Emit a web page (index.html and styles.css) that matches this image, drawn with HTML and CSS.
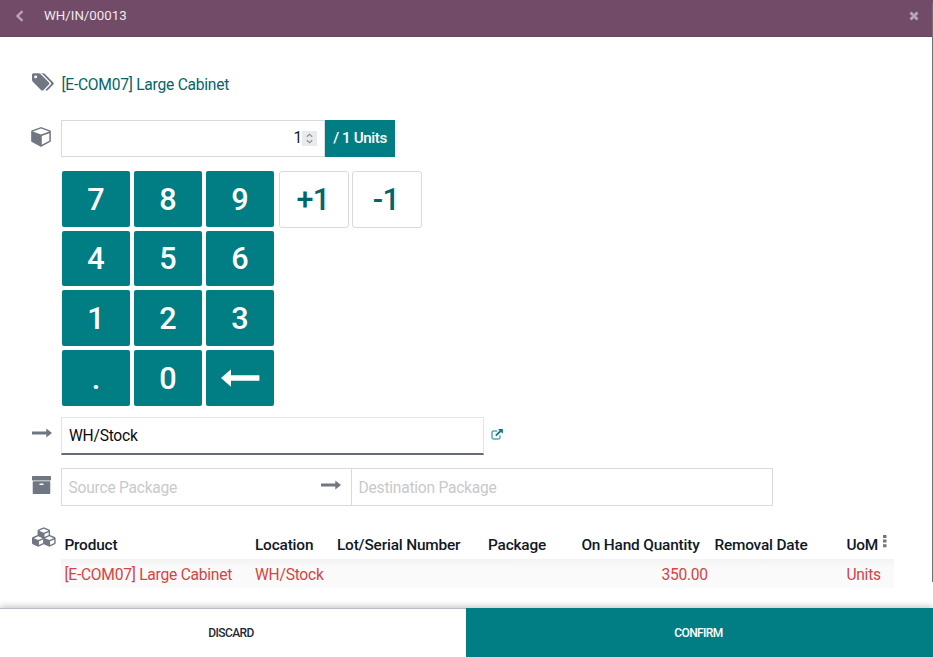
FILE: index.html
```html
<!DOCTYPE html>
<html lang="en">
<head>
<meta charset="utf-8">
<title>WH/IN/00013</title>
<link rel="stylesheet" href="styles.css">
</head>
<body>
<div class="app">
  <header class="topbar">
    <svg class="back" viewBox="0 0 9 12"><path d="M7.5 1.2 2.5 6l5 4.8" fill="none" stroke="currentColor" stroke-width="2.3"/></svg>
    <span class="title">WH/IN/00013</span>
    <svg class="close" viewBox="0 0 10 10"><path d="M1.5 1.5l7 7M8.5 1.5l-7 7" stroke="currentColor" stroke-width="2.9"/></svg>
  </header>
  <main class="form">
    <div class="row product">
      <svg class="icon tags" viewBox="0 128 1920 1536"><path d="M448 448q0-53-37.5-90.5t-90.5-37.5-90.5 37.5-37.5 90.5 37.5 90.5 90.5 37.5 90.5-37.5 37.5-90.5zm1067 576q0 53-37 90l-491 492q-39 37-91 37-53 0-90-37l-715-716q-38-37-64.5-101t-26.5-117v-416q0-52 38-90t90-38h416q53 0 117 26.5t102 64.5l715 714q37 39 37 91zm384 0q0 53-37 90l-491 492q-39 37-91 37-36 0-59-14t-53-45l470-470q37-37 37-90 0-52-37-91l-715-714q-38-38-102-64.5t-117-26.5h224q53 0 117 26.5t102 64.5l715 714q37 39 37 91z"/></svg>
      <span class="product-name">[E-COM07] Large Cabinet</span>
    </div>
    <div class="row quantity">
      <svg class="icon cube" viewBox="0 120 1664 1690"><path d="M896 1629l640-349v-636l-640 233v752zm-64-865l698-254-698-254-698 254zm832-252v768q0 35-18 65t-49 47l-704 384q-28 16-61 16t-61-16l-704-384q-31-17-49-47t-18-65v-768q0-40 23-73t61-47l704-256q22-8 44-8t44 8l704 256q38 14 61 47t23 73z"/></svg>
      <div class="qty-field"><span>1</span>
        <svg class="spinner" viewBox="0 0 15 15"><path d="M4.8 5.8l2.7-2.5 2.7 2.5M4.8 9.2l2.7 2.5 2.7-2.5" fill="none" stroke="#8d9095" stroke-width="1.2"/></svg>
      </div>
      <div class="uom">/ 1 Units</div>
    </div>
    <div class="keys">
      <div class="keypad">
        <button>7</button><button>8</button><button>9</button>
        <button>4</button><button>5</button><button>6</button>
        <button>1</button><button>2</button><button>3</button>
        <button>.</button><button>0</button>
        <button><svg class="backspace" viewBox="0 0 39 18"><path d="M0 9 10 0.3V6.2H38.4V11.8H10V17.7z"/></svg></button>
      </div>
      <div class="steps"><button>+1</button><button>-1</button></div>
    </div>
    <div class="row location">
      <svg class="icon arrow" viewBox="0 0 20 10"><path d="M0 3.6h14.3V.4L20 5l-5.7 4.6V6.4H0z"/></svg>
      <div class="loc-field">WH/Stock</div>
      <svg class="external" viewBox="0 0 12 11"><path d="M6.3 2H2.1Q1 2 1 3.1v5.8Q1 10 2.1 10h5.8Q9 10 9 8.9V6.5" fill="none" stroke="currentColor"/><path d="M4.8 6.7 9.6 2" stroke="currentColor" stroke-width="1.8"/><path d="M7 0H11.8V4.8z" fill="currentColor"/></svg>
    </div>
    <div class="row package">
      <svg class="icon archive" viewBox="64 128 1664 1536" preserveAspectRatio="none"><path d="M1088 832q0-26-19-45t-45-19h-256q-26 0-45 19t-19 45 19 45 45 19h256q26 0 45-19t19-45zm576-192v960q0 26-19 45t-45 19h-1408q-26 0-45-19t-19-45v-960q0-26 19-45t45-19h1408q26 0 45 19t19 45zm64-448v256q0 26-19 45t-45 19h-1536q-26 0-45-19t-19-45v-256q0-26 19-45t45-19h1536q26 0 45 19t19 45z"/></svg>
      <div class="pkg-field source"><span>Source Package</span>
        <svg class="arrow" viewBox="0 0 20 10"><path d="M0 3.6h14.3V.4L20 5l-5.7 4.6V6.4H0z"/></svg>
      </div>
      <div class="pkg-field destination"><span>Destination Package</span></div>
    </div>
    <div class="row stock">
      <svg class="icon cubes" viewBox="0 0 2304 1792"><path d="M640 1632l384-192v-314l-384 164v342zm-64-454l404-173-404-173-404 173zm1088 454l384-192v-314l-384 164v342zm-64-454l404-173-404-173-404 173zm-448-293l384-165v-266l-384 164v267zm-64-379l441-189-441-189-441 189zm1088 518v416q0 36-19 67t-52 47l-448 224q-25 14-57 14t-57-14l-448-224q-4-2-7-4-2 2-7 4l-448 224q-25 14-57 14t-57-14l-448-224q-33-16-52-47t-19-67v-416q0-38 21.5-70t56.5-48l434-186v-400q0-38 21.5-70t56.5-48l448-192q23-10 50-10t50 10l448 192q35 16 56.5 48t21.5 70v400l434 186q36 16 57 48t21 70z"/></svg>
      <div class="table">
        <div class="line head"><span>Product</span><span>Location</span><span>Lot/Serial Number</span><span>Package</span><span class="number">On Hand Quantity</span><span>Removal Date</span><span class="unit">UoM<svg class="dots" viewBox="0 0 4 13"><path d="M0 0h3.5v3H0zM0 4.6h3.5v3H0zM0 9.2h3.5v3H0z"/></svg></span></div>
        <div class="line data"><span>[E-COM07] Large Cabinet</span><span>WH/Stock</span><span></span><span></span><span class="number">350.00</span><span></span><span>Units</span></div>
      </div>
    </div>
  </main>
  <footer class="actions"><button class="discard">DISCARD</button><button class="confirm">CONFIRM</button></footer>
  <div class="scrollbar"></div>
</div>
</body>
</html>
```
FILE: styles.css
```css
* { box-sizing: border-box; }
body { margin: 0; font: 15.6px/20px Roboto, sans-serif; letter-spacing: -0.25px; color: #111827; background: #fff; }
button { margin: 0; padding: 0; border: 0; font-family: inherit; font-weight: 500; letter-spacing: 0; }
svg { display: block; fill: currentColor; flex: none; }
.app { position: relative; width: 933px; height: 657px; display: flex; flex-direction: column; overflow: hidden; }
.topbar { height: 37px; flex: none; display: flex; align-items: center; padding: 0 14px 5px 15px; background: #714b67; border-bottom: 1px solid #68435e; color: #f0e9ee; font-size: 13.3px; letter-spacing: 0; }
.back { width: 9px; height: 12px; color: #b8a5b3; }
.title { margin-left: 20px; }
.close { width: 10px; height: 10px; margin-left: auto; color: #b8a5b3; }
.form { flex: 1; min-height: 0; padding: 34px 38px 0 31px; display: flex; flex-direction: column; }
.row { display: grid; grid-template-columns: 30px auto auto 1fr; }
.icon { color: #707682; }
.product { height: 49px; }
.product-name { color: #01666b; padding: 4px 0 0 0.4px; }
.tags { width: 22px; height: 18px; margin: 2px 0 0 1px; }
.quantity { height: 37px; }
.cube { width: 20px; height: 20px; margin-top: 7px; }
.qty-field { width: 264px; border: 1px solid #d8dadd; display: flex; align-items: center; justify-content: flex-end; padding: 0 7px 1px 0; }
.spinner { width: 15px; height: 15px; background: #e9eaed; }
.uom { width: 70px; background: #017e84; color: #fff; font-weight: 500; font-size: 15.2px; letter-spacing: -0.4px; display: flex; align-items: center; justify-content: center; padding-bottom: 1px; }
.keys { display: flex; gap: 5px; margin: 14px 0 0 31px; height: 235px; }
.keypad { display: grid; grid-template-columns: repeat(3, 68px); grid-auto-rows: 55.5px; gap: 4.2px 4px; }
.keypad button { background: #017e84; color: #fff; font-size: 30.6px; border-radius: 2px; display: flex; align-items: center; justify-content: center; padding-top: 1px; }
.backspace { width: 39px; height: 18px; }
.steps { display: flex; gap: 3px; align-items: flex-start; }
.steps button { width: 70px; height: 56.5px; border: 1px solid #d8dadd; border-radius: 3px; background: #fff; color: #01666b; font-size: 30.6px; letter-spacing: -0.7px; padding: 0 2px 0 0; }
.location { margin-top: 11px; height: 38px; }
.arrow { width: 20px; height: 10px; color: #707682; }
.location > .arrow { margin: 11px 0 0 1px; }
.loc-field { width: 422.5px; height: 37.5px; border: 1px solid #e3e4e7; border-bottom: 2px solid #656b78; padding: 8px 7px 7px; color: #080b12; }
.external { width: 12px; height: 11px; margin: 12px 0 0 7.5px; color: #017e84; }
.package { margin-top: 13px; height: 38px; }
.archive { width: 19px; height: 18px; margin: 8px 0 0 1px; }
.pkg-field { border: 1px solid #d8dadd; display: flex; justify-content: space-between; padding: 9px 7px 7px 6.6px; color: #c8c9cc; }
.source { width: 290px; border-right: 0; padding-right: 10px; }
.source .arrow { margin-top: 2px; }
.destination { width: 422px; }
.stock { margin-top: 20px; grid-template-columns: 30px 833px; }
.cubes { width: 25px; height: 20px; margin: 1px 0 0 1px; }
.line { display: grid; grid-template-columns: 190.6px 82px 151px 93.4px 118px 147px 1fr; padding-left: 3.4px; white-space: nowrap; }
.line .number { text-align: right; }
.head { height: 33px; padding-top: 9px; font-weight: 500; font-size: 15.4px; letter-spacing: -0.18px; }
.head span:nth-child(6) { padding-left: 15px; }
.head .unit { display: flex; }
.dots { width: 4px; height: 13px; margin: 0 0 0 5px; color: #707682; }
.data { height: 29px; padding-top: 6px; color: #d9423f; background: linear-gradient(#f3f3f3, #fafafa 9px); }
.data .number { transform: translateX(8.5px); }
.actions { height: 49px; flex: none; display: grid; grid-template-columns: 466px 1fr; box-shadow: 0 -1px 7px #0004; }
.actions button { font-size: 12px; letter-spacing: -0.6px; padding-right: 2px; }
.discard { background: #fff; color: #1f2937; border-top: 1px solid #b9bdc6; }
.actions .discard { padding-right: 4px; }
.confirm { background: #017e84; color: #fff; }
.scrollbar { position: absolute; right: 0; top: 3px; width: 1px; height: 579px; background: #707070; }
```
